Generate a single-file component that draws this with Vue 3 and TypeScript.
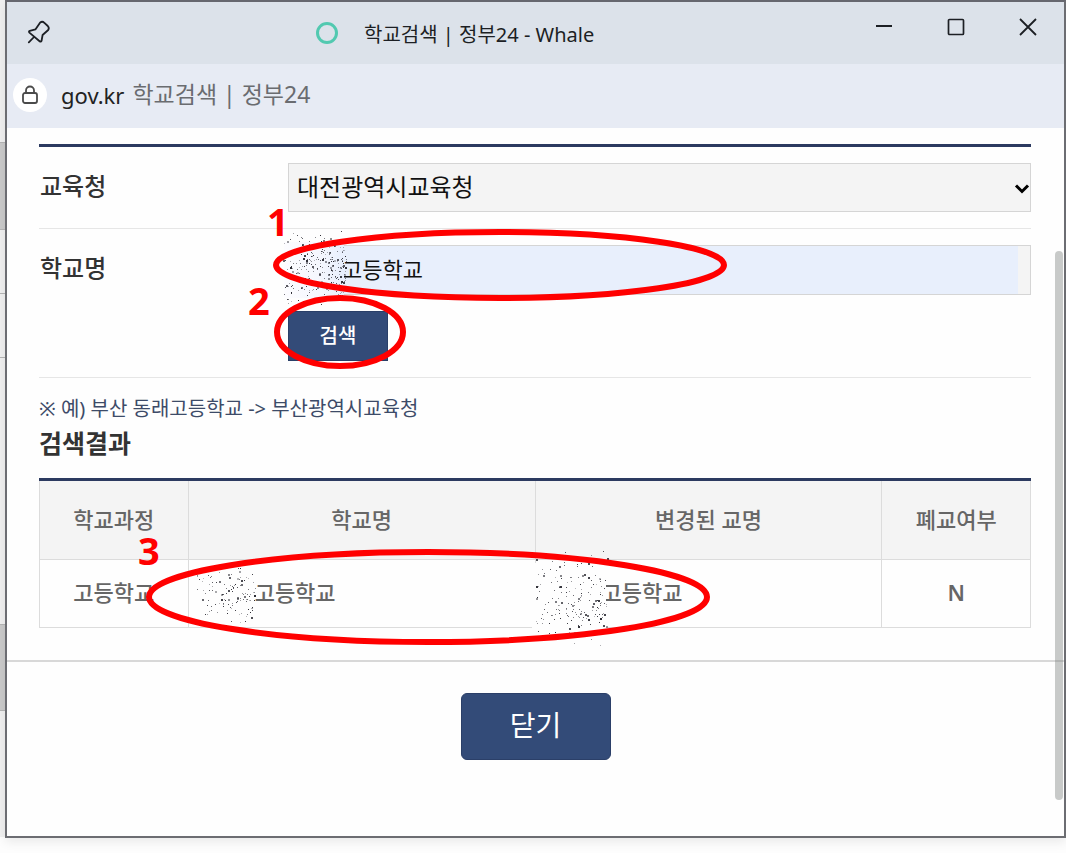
<script setup lang="ts">
import { ref } from 'vue'

interface Result {
  course: string
  name: string
  changed: string
  closed: string
}

interface Speck {
  x: number
  y: number
  s: number
  o: number
}

const office = ref('대전광역시교육청')
const school = ref('고등학교')
const results: Result[] = [
  { course: '고등학교', name: '고등학교', changed: '고등학교', closed: 'N' },
]

// Deterministic speckle so the masked names look the same on every render.
function speckle(x: number, y: number, w: number, h: number, count: number, seed: number): Speck[] {
  let state = seed
  const next = (): number => {
    state = (state * 16807) % 2147483647
    return state / 2147483647
  }
  return Array.from({ length: count }, () => ({
    x: Math.round(x + Math.pow(next(), 0.75) * w),
    y: Math.round(y + ((next() * 2 + next()) / 3) * h),
    s: next() > 0.8 ? 2 : 1,
    o: 0.3 + next() * 0.7,
  }))
}

const specks: Speck[] = [
  ...speckle(283, 228, 63, 80, 260, 4211),
  ...speckle(195, 564, 60, 60, 120, 977),
  ...speckle(533, 550, 74, 98, 190, 3163),
]
</script>

<template>
  <div class="desktop">
    <div class="behind" aria-hidden="true">
      <i class="b1"></i><i class="b2"></i><i class="b3"></i><i class="b4"></i><i class="b5"></i><i class="b6"></i>
    </div>
    <div class="window">
      <header class="titlebar">
        <button class="icon pin" type="button" aria-label="고정">
          <svg width="26" height="26" viewBox="0 0 26 26" fill="none" stroke="#1c1f24" stroke-width="1.8" stroke-linejoin="round" stroke-linecap="round">
            <path d="M14.2 4.4Q16.4 3 18.4 4.8L21.8 8Q23.6 10 22.2 12L16.6 17L15.6 22.6Q15 24.4 13.6 23.2L3.4 14.6Q2.4 13.4 3.8 12.8L9.4 11.4ZM8 19L2.8 24.4" />
          </svg>
        </button>
        <div class="title">
          <svg width="24" height="24" viewBox="0 0 24 24" fill="none">
            <circle cx="12" cy="12" r="9.5" stroke="#52c9b0" stroke-width="3" />
          </svg>
          <span>학교검색 | 정부24 - Whale</span>
        </div>
        <div class="controls">
          <button class="icon" type="button" aria-label="최소화">
            <svg width="18" height="18" viewBox="0 0 18 18" stroke="#1c1f24" stroke-width="2"><path d="M1 8H17" /></svg>
          </button>
          <button class="icon" type="button" aria-label="최대화">
            <svg width="18" height="18" viewBox="0 0 18 18" fill="none" stroke="#1c1f24" stroke-width="1.7"><rect x="1.5" y="1.5" width="15" height="15" rx="1" /></svg>
          </button>
          <button class="icon" type="button" aria-label="창 닫기">
            <svg width="18" height="18" viewBox="0 0 18 18" stroke="#1c1f24" stroke-width="1.8"><path d="M1 1L17 17M17 1L1 17" /></svg>
          </button>
        </div>
      </header>

      <div class="address">
        <span class="lock">
          <svg width="18" height="20" viewBox="0 0 18 20" fill="none" stroke="#4b4b4b" stroke-width="1.8">
            <rect x="2" y="8" width="14" height="10" rx="2" />
            <path d="M5 8V5.5A4 4 0 0 1 13 5.5V8" />
          </svg>
        </span>
        <span class="host">gov.kr</span>
        <span class="page">학교검색 | 정부24</span>
      </div>

      <main class="content">
        <form class="form" @submit.prevent>
          <div class="row">
            <label for="office">교육청</label>
            <div class="field select">
              <select id="office" v-model="office">
                <option>대전광역시교육청</option>
              </select>
              <svg class="chevron" width="16" height="12" viewBox="0 0 16 12" fill="none" stroke="#000" stroke-width="3"><path d="M2 2.5L8 8.5L14 2.5" /></svg>
            </div>
          </div>
          <div class="row">
            <label for="school">학교명</label>
            <div class="stack">
              <div class="field"><input id="school" v-model="school" type="text"></div>
              <button class="search" type="submit">검색</button>
            </div>
          </div>
        </form>
        <p class="note">※ 예) 부산 동래고등학교 -&gt; 부산광역시교육청</p>
        <h2>검색결과</h2>
        <table>
          <thead>
            <tr>
              <th class="narrow" scope="col">학교과정</th>
              <th scope="col">학교명</th>
              <th scope="col">변경된 교명</th>
              <th class="narrow" scope="col">폐교여부</th>
            </tr>
          </thead>
          <tbody>
            <tr v-for="(r, i) in results" :key="i">
              <td>{{ r.course }}</td>
              <td class="masked">{{ r.name }}</td>
              <td class="masked">{{ r.changed }}</td>
              <td>{{ r.closed }}</td>
            </tr>
          </tbody>
        </table>
      </main>

      <footer class="footer">
        <button class="close" type="button">닫기</button>
      </footer>
      <div class="scrollbar"></div>
    </div>

    <svg class="marks" width="1066" height="853" viewBox="0 0 1066 853" aria-hidden="true">
      <defs>
        <linearGradient id="veil">
          <stop offset="0" stop-color="#fcfcff" />
          <stop offset="0.6" stop-color="#f5f7fe" />
          <stop offset="1" stop-color="#e8effd" />
        </linearGradient>
      </defs>
      <rect x="284" y="242" width="60" height="56" fill="url(#veil)" />
      <rect x="532" y="563" width="74" height="68" fill="#fefefe" />
      <rect v-for="(d, i) in specks" :key="i" :x="d.x" :y="d.y" :width="d.s" :height="d.s" :opacity="d.o" fill="#2b2b33" />
      <g fill="none" stroke="#ff0000" stroke-width="6">
        <ellipse cx="500" cy="265" rx="224" ry="33" />
        <ellipse cx="340" cy="332" rx="63" ry="34" />
        <ellipse cx="428" cy="597" rx="279" ry="45" />
      </g>
      <g class="digits">
        <text x="267" y="236">1</text>
        <text x="248" y="315">2</text>
        <text x="138" y="565">3</text>
      </g>
    </svg>
  </div>
</template>

<style>
body {
  margin: 0;
  background: #fff;
}
</style>

<style scoped>
* {
  box-sizing: border-box;
}
.desktop {
  position: relative;
  display: flex;
  min-height: 100vh;
  align-items: flex-start;
  overflow: hidden;
  background: #fdfdfd;
  font-family: "Noto Sans", "Noto Sans CJK KR", sans-serif;
  color: #333;
}
.behind {
  display: flex;
  flex-direction: column;
  width: 5px;
  height: 837px;
  background: #f0f0f0;
}
.behind i {
  border-bottom: 1px solid #b5b5b5;
}
.b1 { height: 143px; }
.b2 { height: 87px; background: #cacaca; }
.b3 { height: 64px; }
.b4 { height: 64px; }
.b5 { height: 267px; }
.b6 { height: 86px; background: #cacaca; }
.window {
  position: relative;
  flex: 1;
  border: 2px solid #6c6d72;
  border-top-color: #66676f;
  background: #fefefe;
  box-shadow: 0 4px 10px rgba(0, 0, 0, 0.08);
}
button,
input,
select {
  font-family: inherit;
}
.titlebar {
  display: flex;
  align-items: flex-start;
  height: 62px;
  padding: 16px 27px 0 19px;
  background: #dce2ea;
}
.icon {
  display: block;
  padding: 0;
  border: 0;
  background: none;
}
.icon svg {
  display: block;
}
.title {
  display: flex;
  align-items: center;
  gap: 25px;
  height: 30px;
  margin-left: 263px;
  font-size: 20px;
  line-height: 30px;
  color: #1c1f24;
}
.title span {
  padding-top: 4px;
}
.controls {
  display: flex;
  gap: 54px;
  margin-left: auto;
}
.address {
  display: flex;
  align-items: center;
  height: 64px;
  padding: 0 6px 2px;
  background: #e7ebf4;
  font-size: 22px;
  line-height: 32px;
}
.lock {
  display: grid;
  place-items: center;
  width: 34px;
  height: 34px;
  margin-right: 14px;
  border-radius: 50%;
  background: #fff;
}
.host {
  margin-right: 8px;
  color: #222;
}
.page {
  font-size: 23px;
  padding-bottom: 2px;
  color: #6a6c70;
}
.content {
  padding: 16px 33px 32px 32px;
}
.form {
  border-top: 3px solid #2c3a60;
}
.row {
  display: flex;
  align-items: flex-start;
  padding: 16px 0;
  border-bottom: 1px solid #e6e6e6;
}
.row label {
  width: 249px;
  padding-left: 1px;
  font-size: 24px;
  font-weight: 500;
  line-height: 46px;
}
.field {
  position: relative;
  flex: 1;
  height: 50px;
  padding-right: 12px;
  border: 1px solid #d5d5d5;
  background: #f4f4f4;
}
.field.select {
  height: 49px;
  padding: 0;
}
.stack {
  display: flex;
  flex: 1;
  flex-direction: column;
  align-items: flex-start;
  gap: 16px;
}
.stack .field {
  flex: none;
  width: 100%;
}
select,
input {
  display: block;
  width: 100%;
  height: 100%;
  padding: 0 8px 2px;
  border: 0;
  border-radius: 0;
  outline: 0;
  appearance: none;
  background: transparent;
  color: #111;
  font-size: 24px;
}
input {
  padding: 0 8px 4px 53px;
  background: #e8effc;
  font-size: 22px;
}
.chevron {
  position: absolute;
  top: 19px;
  right: 0;
  pointer-events: none;
}
.search {
  width: 100px;
  height: 50px;
  padding: 0 0 4px;
  border: 1px solid #2a3f68;
  background: #334b78;
  color: #fff;
  font-size: 20px;
  font-weight: 500;
}
.note {
  margin: 16px 0 0;
  font-size: 20px;
  line-height: 30px;
  color: #3d4b68;
}
h2 {
  margin: 0 0 16px;
  font-size: 25px;
  font-weight: 700;
  line-height: 38px;
}
table {
  width: 100%;
  border-collapse: collapse;
  table-layout: fixed;
  border-top: 3px solid #2c3a60;
  font-size: 22px;
  line-height: 32px;
  color: #666;
}
th,
td {
  height: 68px;
  padding: 0 0 4px;
  border: 1px solid #dcdcdc;
  font-weight: 500;
  text-align: center;
}
th {
  height: 80px;
  padding-bottom: 2px;
  border-top: 0;
  background: #f4f4f4;
}
td:last-child {
  font-weight: 600;
}
.narrow {
  width: 15%;
}
td.masked {
  padding-left: 66px;
  text-align: left;
}
.footer {
  display: flex;
  justify-content: center;
  padding: 31px 0 76px;
  border-top: 2px solid #d8d8d8;
}
.close {
  width: 150px;
  height: 67px;
  padding: 0 0 6px;
  border: 1px solid #2b3f68;
  border-radius: 6px;
  background: #334b78;
  color: #fff;
  font-size: 28px;
}
.scrollbar {
  position: absolute;
  top: 249px;
  right: 1px;
  width: 8px;
  height: 549px;
  border-radius: 4px;
  background: rgba(120, 125, 122, 0.4);
}
.marks {
  position: absolute;
  top: 0;
  left: 0;
  pointer-events: none;
}
.digits {
  fill: #ff0000;
  font-size: 38px;
  font-weight: 700;
}
</style>
